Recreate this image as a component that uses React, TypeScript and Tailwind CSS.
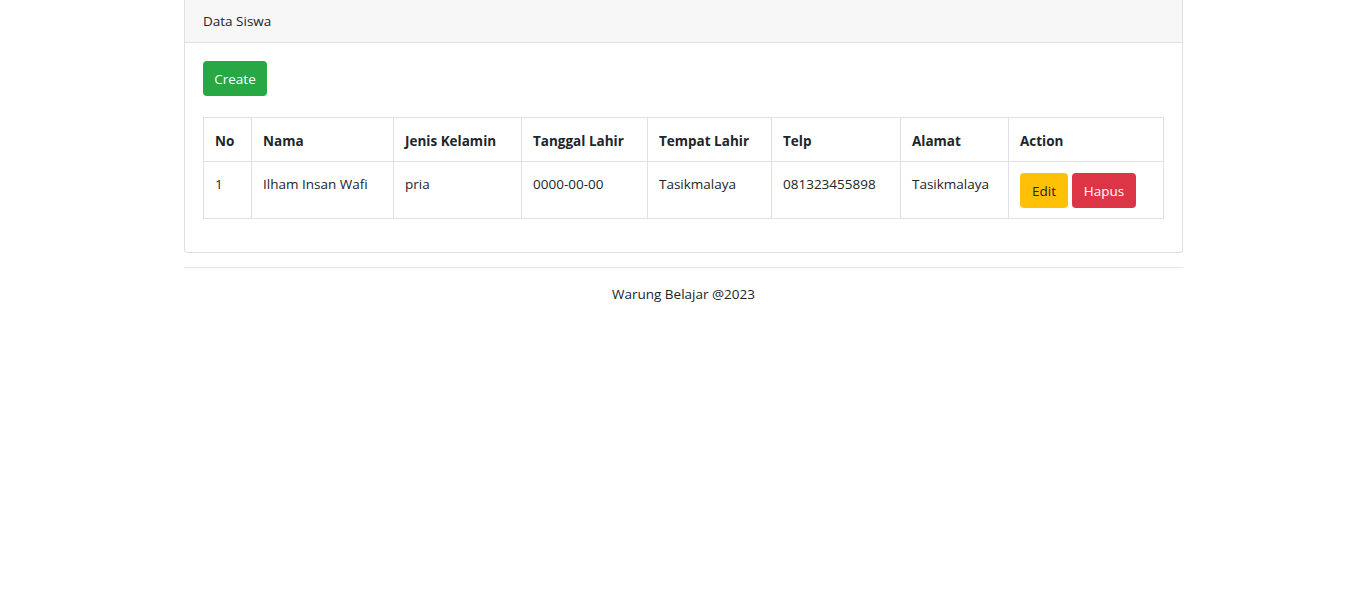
const siswa = [
	{
		no: 1,
		nama: "Ilham Insan Wafi",
		jk: "pria",
		tgl: "0000-00-00",
		tempat: "Tasikmalaya",
		telp: "081323455898",
		alamat: "Tasikmalaya",
	},
];

const App = () => {
	return (
		<div
			className="min-h-screen bg-white text-[14px] leading-[21px] text-[#212529]"
			style={{ fontFamily: '"Open Sans", "Noto Sans", sans-serif' }}
		>
			<div className="w-[999px] ml-[184px]">
				<div className="border-x border-b border-[#dfdfdf] rounded-b-[4px]">
					<div className="bg-[#f7f7f7] border-b border-[#dfdfdf] h-[43px] px-[18px] flex items-center">
						<span className="text-[13.5px]">Data Siswa</span>
					</div>
					<div className="px-[18px] pt-[18px] pb-[33px]">
						<button className="bg-[#28a745] text-white rounded-[4px] h-[35px] w-[64px] pt-[2px] text-[13.5px]">
							Create
						</button>
						<table className="mt-[21px] w-[960px] border-collapse table-fixed">
							<colgroup>
								<col className="w-[48px]" />
								<col className="w-[142px]" />
								<col className="w-[128px]" />
								<col className="w-[126px]" />
								<col className="w-[124px]" />
								<col className="w-[129px]" />
								<col className="w-[108px]" />
								<col className="w-[155px]" />
							</colgroup>
							<thead>
								<tr className="h-[44px]">
									{[
										"No",
										"Nama",
										"Jenis Kelamin",
										"Tanggal Lahir",
										"Tempat Lahir",
										"Telp",
										"Alamat",
										"Action",
									].map((h) => (
										<th
											key={h}
											className="border border-[#dee2e6] px-[11px] pt-[3px] text-left font-bold text-[13.5px] whitespace-nowrap"
										>
											{h}
										</th>
									))}
								</tr>
							</thead>
							<tbody>
								{siswa.map((s) => (
									<tr key={s.no} className="h-[57px]">
										{[s.no, s.nama, s.jk, s.tgl, s.tempat, s.telp, s.alamat].map(
											(v, i) => (
												<td
													key={i}
													className="border border-[#dee2e6] px-[11px] pt-[12px] align-top text-[13.5px] whitespace-nowrap"
												>
													{v}
												</td>
											)
										)}
										<td className="border border-[#dee2e6] px-[11px] align-middle">
											<div className="flex gap-[4px]">
												<button className="bg-[#ffc107] text-[#212529] rounded-[4px] h-[35px] w-[48px] pt-[2px] text-[13.5px]">
													Edit
												</button>
												<button className="bg-[#dc3545] text-white rounded-[4px] h-[35px] w-[64px] pt-[2px] text-[13.5px]">
													Hapus
												</button>
											</div>
										</td>
									</tr>
								))}
							</tbody>
						</table>
					</div>
				</div>
				<div className="mt-[14px] border-t border-[#e5e5e5] pt-[16px] text-center text-[13.5px]">
					Warung Belajar @2023
				</div>
			</div>
		</div>
	);
};

export default App;
